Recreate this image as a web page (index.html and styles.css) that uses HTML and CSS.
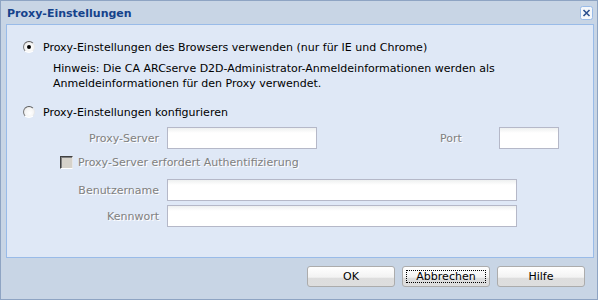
FILE: index.html
```html
<!DOCTYPE html>
<html lang="de">
<head>
<meta charset="utf-8">
<title>Proxy-Einstellungen</title>
<link rel="stylesheet" href="styles.css">
</head>
<body>
<div class="window">
  <div class="titlebar">
    <span class="title">Proxy-Einstellungen</span>
    <span class="close">
      <svg width="13" height="14" viewBox="0 0 13 14">
        <rect x="0.5" y="0.5" width="12" height="13" rx="2" fill="#f4f7fb" stroke="#99bbe8"/>
        <path d="M3.5 4 L9.5 10 M9.5 4 L3.5 10" stroke="#2b4f8f" stroke-width="1.6"/>
      </svg>
    </span>
  </div>
  <div class="panel">
    <div class="radio-row first">
      <span class="radio checked"></span>
      <span class="radio-label">Proxy-Einstellungen des Browsers verwenden (nur für IE und Chrome)</span>
    </div>
    <p class="hint">Hinweis: Die CA ARCserve D2D-Administrator-Anmeldeinformationen werden als<br>Anmeldeinformationen für den Proxy verwendet.</p>
    <div class="radio-row second">
      <span class="radio"></span>
      <span class="radio-label">Proxy-Einstellungen konfigurieren</span>
    </div>
    <div class="form">
      <div class="field-row server-row">
        <span class="label">Proxy-Server</span>
        <span class="input w-server"></span>
        <span class="label port-label">Port</span>
        <span class="input w-port"></span>
      </div>
      <div class="check-row">
        <span class="checkbox"></span>
        <span class="disabled-text">Proxy-Server erfordert Authentifizierung</span>
      </div>
      <div class="field-row user-row">
        <span class="label">Benutzername</span>
        <span class="input w-long"></span>
      </div>
      <div class="field-row pass-row">
        <span class="label">Kennwort</span>
        <span class="input w-long"></span>
      </div>
    </div>
  </div>
  <div class="footer">
    <button class="btn"><span class="btn-text">OK</span></button>
    <button class="btn focused"><span class="btn-text">Abbrechen</span></button>
    <button class="btn"><span class="btn-text">Hilfe</span></button>
  </div>
</div>
</body>
</html>
```
FILE: styles.css
```css
* { box-sizing: border-box; }
html, body { margin: 0; padding: 0; }
body {
  width: 598px;
  height: 300px;
  font-family: "DejaVu Sans", Verdana, sans-serif;
  font-size: 11px;
  color: #000;
  background: #c9d6e5;
}
.window {
  width: 598px;
  height: 300px;
  border: 1px solid #8ea4c3;
  background: #c8d5e5;
  display: flex;
  flex-direction: column;
}
.titlebar {
  height: 23px;
  display: flex;
  align-items: center;
  justify-content: space-between;
  padding: 0 4px 0 6px;
}
.title {
  font-weight: bold;
  color: #15428b;
  font-size: 11px;
  margin-top: 1px;
}
.close { display: block; width: 13px; height: 14px; margin-top: 1px; }
.close svg { display: block; }
.panel {
  margin: 0 3px 0 5px;
  height: 234px;
  border: 1px solid #99bbe8;
  background: #dfe8f6;
  display: flex;
  flex-direction: column;
}
.radio-row {
  display: flex;
  align-items: center;
  height: 18px;
  padding-left: 16px;
}
.radio-row.first { margin-top: 13px; }
.radio-row.second { margin-top: 12px; }
.radio {
  width: 12px;
  height: 12px;
  border-radius: 50%;
  border: 1px solid;
  border-color: #5a5a5a #e8e8e8 #ffffff #7a7a7a;
  background: radial-gradient(circle at 60% 60%, #ffffff 0%, #f4f4f4 55%, #d8d8d8 100%);
  position: relative;
  flex: none;
}
.radio.checked::after {
  content: "";
  position: absolute;
  left: 3px;
  top: 3px;
  width: 4px;
  height: 4px;
  border-radius: 50%;
  background: #000;
}
.radio-label { margin-left: 8px; white-space: nowrap; }
.hint {
  margin: 5px 0 0 46px;
  line-height: 15px;
  white-space: nowrap;
}
.form { padding-left: 52px; }
.field-row {
  display: flex;
  align-items: center;
  height: 22px;
}
.server-row { margin-top: 6px; }
.user-row { margin-top: 8px; }
.pass-row { margin-top: 4px; }
.label {
  width: 100px;
  text-align: right;
  color: #808080;
  text-shadow: 1px 1px 0 #ffffff;
  margin-right: 8px;
  white-space: nowrap;
}
.port-label {
  width: 59px;
  text-align: left;
  margin-left: 123px;
  margin-right: 0;
}
.input {
  height: 22px;
  border: 1px solid #b5b8c8;
  background: linear-gradient(#eef0f0 0px, #ffffff 5px, #ffffff 100%);
  flex: none;
}
.w-server { width: 150px; }
.w-port { width: 60px; }
.w-long { width: 350px; }
.check-row {
  display: flex;
  align-items: center;
  height: 17px;
  margin-top: 5px;
}
.checkbox {
  width: 13px;
  height: 13px;
  margin-left: 1px;
  background: #d6d2ca;
  border: 1px solid;
  border-color: #404040 #e6e6e6 #ffffff #404040;
  box-shadow: inset 1px 1px 0 #808080;
  flex: none;
}
.disabled-text {
  margin-left: 5px;
  color: #808080;
  text-shadow: 1px 1px 0 #ffffff;
  white-space: nowrap;
}
.footer {
  flex: 1;
  display: flex;
  justify-content: flex-end;
  align-items: flex-start;
  gap: 7px;
  padding: 8px 12px 0 0;
}
.btn {
  width: 88px;
  height: 21px;
  padding: 0;
  border: 1px solid #acacac;
  border-radius: 3px;
  background: linear-gradient(#ffffff 0%, #f2f2f2 55%, #dddddd 56%, #dedede 100%);
  font-family: "DejaVu Sans", Verdana, sans-serif;
  font-size: 11px;
  color: #000;
  display: flex;
  align-items: stretch;
}
.btn-text {
  flex: 1;
  margin: 3px;
  display: flex;
  align-items: center;
  justify-content: center;
  border: 1px solid transparent;
}
.btn.focused .btn-text { border: 1px dotted #000; }
```
